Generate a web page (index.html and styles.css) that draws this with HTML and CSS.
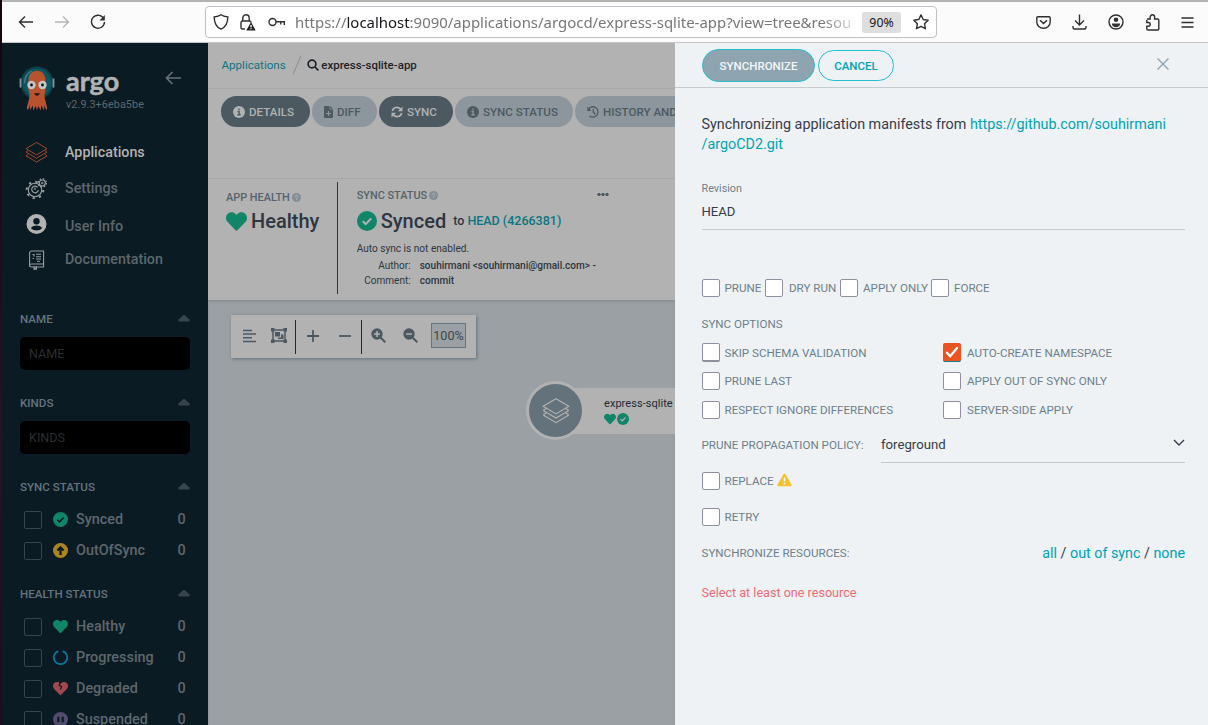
FILE: index.html
```html
<!DOCTYPE html>
<html lang="en">
<head>
<meta charset="utf-8">
<title>express-sqlite-app - Argo CD</title>
<link rel="stylesheet" href="styles.css">
</head>
<body>
<svg class="defs" aria-hidden="true">
  <symbol id="heart" viewBox="0 0 512 512"><path d="M462 62c-55-47-136-38-186 14l-20 20-20-20C186 24 105 15 50 62c-63 54-66 150-10 208l193 200c13 13 33 13 46 0l193-200c56-58 53-154-10-208z"/></symbol>
  <symbol id="check" viewBox="0 0 24 24"><circle cx="12" cy="12" r="12"/><path class="cut" d="M7 12.3l3.4 3.4L17 9" fill="none" stroke-width="2.4"/></symbol>
  <symbol id="info" viewBox="0 0 24 24"><circle cx="12" cy="12" r="12"/><path class="cut" d="M12 5v3.2M9 11h3.3v6M8.7 17.5h6.8" fill="none" stroke-width="2.6"/></symbol>
  <symbol id="help" viewBox="0 0 24 24"><circle cx="12" cy="12" r="12"/><path class="cut" d="M8.5 9.5c0-4.500 7-4.500 7 0 0 2.500-3.500 2.500-3.500 5M12 16.500v2.500" fill="none" stroke-width="2.500"/></symbol>
  <symbol id="layers" viewBox="0 0 24 24"><path d="M12 1.500l11 6.500-11 6.500L1 8zM1 11.500l11 6.500 11-6.500M1 15.500l11 6.500 11-6.500M1 11.500l2.500-1.700M23 11.500l-2.500-1.700M1 15.500l2.500-1.800M23 15.500l-2.500-1.800" fill="none" stroke="currentColor" stroke-width="1"/></symbol>
</svg>
<div class="window">
  <header class="chrome">
    <div class="nav-buttons">
      <svg width="16" height="14" viewBox="0 0 16 14"><path d="M15 7H1.500M7 1.500L1.500 7 7 12.500"/></svg>
      <svg class="dim" width="16" height="14" viewBox="0 0 16 14"><path d="M1 7h13.500M9 1.500L14.500 7 9 12.500"/></svg>
      <svg width="16" height="16" viewBox="0 0 16 16"><path d="M14 5.200A6.500 6.500 0 1 0 14.500 8"/><path d="M14.800 1v5.400H9.400z" fill="#333" stroke="none"/></svg>
    </div>
    <div class="urlbar">
      <svg width="16" height="16" viewBox="0 0 16 16"><path d="M8 .8c2 1.600 4.300 2 6.800 2.200 0 6-1.800 10-6.800 12.200C3 13 1.200 9 1.200 3 3.700 2.800 6 2.400 8 .8z"/></svg>
      <svg class="lock" width="16" height="17" viewBox="0 0 16 17"><path d="M5 15H2.500Q1 15 1 13.500V8.500Q1 7 2.500 7h7Q11 7 11 8.500M2.800 7V4a3.200 3.200 0 0 1 6.400 0v3"/><path d="M11 8l4.700 8.500H6.300z" fill="#222" stroke="none"/><path d="M11 11v2.300M11 14.300v1" stroke="#fff"/></svg>
      <svg class="key" width="17" height="10" viewBox="0 0 17 10"><circle cx="4.500" cy="5" r="3.500"/><path d="M8 4.800h8.300V8M12.800 5v2.500"/></svg>
      <div class="url"><span class="grey">https://</span>localhost<span class="grey">:9090/applications/argocd/express-sqlite-app?view=tree&amp;resou</span></div>
      <span class="zoom">90%</span>
      <svg width="16" height="16" viewBox="0 0 16 16"><path d="M8 .9l2.200 4.600 5 .7-3.700 3.500.9 5L8 12.300l-4.500 2.400.9-5L.8 6.200l5-.7z" stroke-linejoin="round"/></svg>
    </div>
    <div class="chrome-tools">
      <svg width="15" height="13" viewBox="0 0 15 13"><path d="M2 .8h11q1.200 0 1.200 1.200v4a6.700 6.300 0 0 1-13.400 0V2Q.8.800 2 .8zM4 4.200l3.500 3.400L11 4.200"/></svg>
      <svg width="15" height="16" viewBox="0 0 15 16"><path d="M7.500.500v10.300M3 6.500l4.500 4.500L12 6.500M1 12v1.500Q1 15 2.500 15h10q1.500 0 1.500-1.500V12"/></svg>
      <svg width="16" height="16" viewBox="0 0 16 16"><circle cx="8" cy="8" r="7"/><path d="M3.800 9.500h8.400c-.4 5-8 5-8.400 0z" fill="#333" stroke="none"/><circle cx="8" cy="5.800" r="2.300" fill="#333" stroke="none"/></svg>
      <svg width="15" height="17" viewBox="0 0 15 17"><path d="M2 5h3.200V3a2.200 2.200 0 0 1 4.400 0v2h3q1.200 0 1.200 1.200V15q0 1-1 1H3q-1.200 0-1.200-1.200v-2.600h1.500c2.600 0 2.600-3.700 0-3.700H1.800V6"/></svg>
      <svg width="13" height="11" viewBox="0 0 13 11"><path d="M.500 1h12M.500 5.500h12M.500 10h12"/></svg>
    </div>
  </header>

  <div class="app">
    <aside class="sidebar">
      <div class="brand">
        <svg class="mascot" width="36" height="46" viewBox="0 0 36 46">
          <circle cx="18" cy="17" r="16.500" fill="#0d4149"/><circle cx="18" cy="17" r="14.500" fill="#0d5560"/>
          <path d="M5.500 17q0-8 7-12" stroke="#46838a" stroke-width="1.200" fill="none"/>
          <path d="M9.500 14C9.500 1.500 26.500 1.500 26.500 14c.5 3 .8 7 0 10-1 4-1.500 7 0 11 .8 4 2 6.500 1.500 9-1.500-1-2.500-3-3-5l.2 5.500-3-5-.4 5-2.600-4.500-1.200 4.500-1.200-4.500-2.600 4.500-.4-5-3 5 .2-5.500c-.5 2-1.500 4-3 5-.5-2.500.7-5 1.500-9 1.500-4 1-7 0-11-.8-3-.5-7 0-10z" fill="#b8532f"/>
          <circle cx="12.500" cy="19" r="4.200" fill="#c4c4c4"/><circle cx="23.500" cy="19" r="4.200" fill="#c4c4c4"/>
          <circle cx="12.500" cy="19" r="1.400" fill="#111"/><circle cx="23.500" cy="19" r="1.400" fill="#111"/>
          <path d="M15 27.300q3 5 6 0z" fill="#251411"/>
          <path d="M1.500 12.500v9M34.500 12.500v9" stroke="#8295a1" stroke-width="1.800"/>
        </svg>
        <div class="brand-text"><span class="wordmark">argo</span><span class="version">v2.9.3+6eba5be</span></div>
        <svg class="collapse" width="17" height="14" viewBox="0 0 17 14"><path d="M16 7H2M7.500 1L1.500 7l6 6" fill="none" stroke="#66727a" stroke-width="1.700"/></svg>
      </div>
      <nav class="menu">
        <a class="item active"><svg class="orange" width="23" height="23"><use href="#layers"/></svg>Applications</a>
        <a class="item"><svg width="23" height="21" viewBox="0 0 23 21"><g fill="none" stroke="#9a9fa2"><circle cx="10" cy="12" r="6.700" stroke-width="1.100"/><circle cx="10" cy="12" r="8.300" stroke-width="2" stroke-dasharray="2.300 4.220"/><path d="M12.500 9.300a3.300 3.300 0 1 0 .8 2.700M10 12V9.500" stroke-width="1.200"/><circle cx="17.300" cy="5" r="3" fill="#0b1b24" stroke-width="1.100"/><circle cx="17.300" cy="5" r="4.100" stroke-width="1.300" stroke-dasharray="1.600 1.620"/><circle cx="17.300" cy="5" r=".8"/></g></svg>Settings</a>
        <a class="item user"><svg width="23" height="20" viewBox="0 0 23 20"><circle cx="11.500" cy="10" r="10" fill="#b2b2b2"/><circle cx="11.500" cy="7.200" r="3.200" fill="#0b1b24"/><path d="M6 14.300c1-3.800 10-3.800 11 0-3 3-8 3-11 0z" fill="#0b1b24"/></svg>User Info</a>
        <a class="item docs"><svg width="23" height="20" viewBox="0 0 23 20"><g fill="none" stroke="#969ca0" stroke-width="1.100"><path d="M4.600 17V3Q4.600 1 6.600 1h12v16H6.500q-2-.200-2-1.600 0-1.300 2-1.400h12"/><path d="M7.500 4.500h1.500v2M7.500 8.500h1.500M11 4.200h5M11 6.700h5M11 9h5M12 11.300h3M9 16v3.500l1.200-1 1.200 1V16"/></g></svg>Documentation</a>
      </nav>
      <h4 class="filter-title first">NAME<i class="caret"></i></h4>
      <div class="filter-input">NAME</div>
      <h4 class="filter-title">KINDS<i class="caret"></i></h4>
      <div class="filter-input">KINDS</div>
      <h4 class="filter-title tight">SYNC STATUS<i class="caret"></i></h4>
      <div class="filter-row"><i class="box"></i><svg class="green" width="15" height="15"><use href="#check"/></svg><span>Synced</span><b>0</b></div>
      <div class="filter-row"><i class="box"></i><svg width="15" height="15" viewBox="0 0 24 24"><circle cx="12" cy="12" r="12" fill="#ab8520"/><path d="M12 19V7M7 12l5-5 5 5" fill="none" stroke="#0b1b24" stroke-width="3.600"/></svg><span>OutOfSync</span><b>0</b></div>
      <h4 class="filter-title health">HEALTH STATUS<i class="caret"></i></h4>
      <div class="filter-row"><i class="box"></i><svg class="green" width="15" height="15"><use href="#heart"/></svg><span>Healthy</span><b>0</b></div>
      <div class="filter-row"><i class="box"></i><svg width="15" height="15" viewBox="0 0 24 24"><path d="M15.500 1.800a10.700 10.700 0 1 1-7 0" fill="none" stroke="#0b77a0" stroke-width="2.700"/></svg><span>Progressing</span><b>0</b></div>
      <div class="filter-row"><i class="box"></i><svg class="red" width="15" height="15" viewBox="0 0 512 512"><use href="#heart"/><path d="M250 50l-40 95 85 50-45 95" fill="none" stroke="#0b1b24" stroke-width="40"/></svg><span>Degraded</span><b>0</b></div>
      <div class="filter-row"><i class="box"></i><svg width="15" height="15" viewBox="0 0 24 24"><circle cx="12" cy="12" r="12" fill="#534c6c"/><path d="M8.500 7.500v9M15.500 7.500v9" stroke="#0b1b24" stroke-width="3.500"/></svg><span>Suspended</span><b>0</b></div>
    </aside>

    <main class="main">
      <div class="crumbs"><a>Applications</a><svg width="10" height="20" viewBox="0 0 10 20"><path d="M9 .5L1 19.500" stroke="#888f94"/></svg><svg class="search" width="12" height="12" viewBox="0 0 12 12"><circle cx="5" cy="5" r="3.900"/><path d="M8 8l3.400 3.400"/></svg><b>express-sqlite-app</b></div>
      <div class="toolbar">
        <span class="btn dark details"><svg width="12" height="12"><use href="#info"/></svg>DETAILS</span>
        <span class="btn light diff"><svg width="9" height="12" viewBox="0 0 9 12"><path d="M1 0h4.500v3.500H9V11q0 1-1 1H1q-1 0-1-1V1q0-1 1-1zM6.300 0L9 2.700H6.300z"/><path class="cut" d="M4.500 5v5M2 7.500h5" stroke-width="1.200"/></svg>DIFF</span>
        <span class="btn dark sync"><svg width="12" height="12" viewBox="0 0 12 12"><path d="M1.300 5a4.700 4.700 0 0 1 8.500-1.500M10.700 7a4.700 4.700 0 0 1-8.500 1.500" fill="none" stroke="currentColor" stroke-width="1.600"/><path d="M11.500.500v4.700H6.800zM.5 11.500V6.800h4.700z"/></svg>SYNC</span>
        <span class="btn light status-btn"><svg width="12" height="12"><use href="#info"/></svg>SYNC STATUS</span>
        <span class="btn light history"><svg width="12" height="12" viewBox="0 0 12 12"><path d="M1.500 3A5.200 5.200 0 1 1 2.500 10M6.300 3v3.200l2 2" fill="none" stroke="currentColor" stroke-width="1.300"/><path d="M.3.800v4.300h4.300z"/></svg>HISTORY AND</span>
      </div>
      <section class="status">
        <div class="health-col">
          <div class="label">APP HEALTH<svg width="9" height="9"><use href="#help"/></svg></div>
          <div class="big"><svg class="green" width="21" height="21"><use href="#heart"/></svg>Healthy</div>
        </div>
        <div class="sync-col">
          <div class="label">SYNC STATUS<svg width="9" height="9"><use href="#help"/></svg><i class="dots"></i></div>
          <div class="big"><svg class="green" width="20" height="20"><use href="#check"/></svg>Synced<small>to <a>HEAD (4266381)</a></small></div>
          <div class="note">Auto sync is not enabled.</div>
          <div class="meta"><span>Author:</span><b>souhirmani &lt;souhirmani@gmail.com&gt; -</b></div>
          <div class="meta"><span>Comment:</span><b>commit</b></div>
        </div>
      </section>
      <section class="tree">
        <div class="graph-tools">
          <svg class="g-align" width="13" height="14" viewBox="0 0 13 14"><path d="M0 1.500h9M0 5h13M0 8.800h9M0 12.500h13"/></svg>
          <svg class="g-group" width="16" height="15" viewBox="0 0 16 15"><path d="M2 2h12v11H2z" stroke-width="1.500"/><path d="M0 0h3.500v3.500H0zM12.500 0H16v3.500h-3.500zM0 11.500h3.500V15H0zM12.500 11.500H16V15h-3.500zM4 4h5v4.500H4zM10 6.500h2.500V11H7V9.500h3z" fill="#4c5961" stroke="none"/></svg>
          <i class="bar"></i>
          <svg class="g-plus" width="12" height="12" viewBox="0 0 12 12"><path d="M6 0v12M0 6h12"/></svg>
          <svg class="g-minus" width="12" height="12" viewBox="0 0 12 12"><path d="M0 6h12"/></svg>
          <i class="bar"></i>
          <svg class="g-in" width="15" height="15" viewBox="0 0 15 15"><circle cx="6" cy="6" r="5.700" fill="#4c5961" stroke="none"/><path d="M9.500 9.500l4.800 4.800" stroke-width="2"/><path d="M6 3v6M3 6h6" stroke="#b2b2b2" stroke-width="1.500"/></svg>
          <svg class="g-out" width="15" height="15" viewBox="0 0 15 15"><circle cx="6" cy="6" r="5.700" fill="#4c5961" stroke="none"/><path d="M9.500 9.500l4.800 4.800" stroke-width="2"/><path d="M3 6h6" stroke="#b2b2b2" stroke-width="1.500"/></svg>
          <span class="percent">100%</span>
        </div>
        <div class="node">
          <div class="node-icon"><svg width="28" height="28"><use href="#layers"/></svg></div>
          <div class="node-card"><span>express-sqlite</span><div class="node-status"><svg width="12" height="12"><use href="#heart"/></svg><svg width="12" height="12"><use href="#check"/></svg></div></div>
        </div>
      </section>
    </main>

    <section class="panel">
      <div class="panel-head">
        <span class="pill primary">SYNCHRONIZE</span><span class="pill cancel">CANCEL</span>
        <svg class="close" width="12" height="12" viewBox="0 0 12 12"><path d="M.5.500l11 11M11.500.500l-11 11" stroke="#8fa4b1" stroke-width="1.400"/></svg>
      </div>
      <div class="panel-body">
        <p class="intro">Synchronizing application manifests from <a>https://github.com/souhirmani<br>/argoCD2.git</a></p>
        <div class="revision-label">Revision</div>
        <div class="revision">HEAD</div>
        <div class="flags">
          <label class="opt f1"><i class="cb"></i>PRUNE</label><label class="opt f2"><i class="cb"></i>DRY RUN</label><label class="opt f3"><i class="cb"></i>APPLY ONLY</label><label class="opt f4"><i class="cb"></i>FORCE</label>
        </div>
        <div class="caption">SYNC OPTIONS</div>
        <div class="options">
          <label class="opt"><i class="cb edge"></i>SKIP SCHEMA VALIDATION</label>
          <label class="opt right"><i class="cb on"><svg width="18" height="19" viewBox="0 0 18 19"><path d="M4 9.700l3.200 3.500L14 5" fill="none" stroke="#fff" stroke-width="2.300" stroke-linecap="round"/></svg></i>AUTO-CREATE NAMESPACE</label>
          <label class="opt"><i class="cb"></i>PRUNE LAST</label>
          <label class="opt right"><i class="cb"></i>APPLY OUT OF SYNC ONLY</label>
          <label class="opt"><i class="cb"></i>RESPECT IGNORE DIFFERENCES</label>
          <label class="opt right"><i class="cb"></i>SERVER-SIDE APPLY</label>
        </div>
        <div class="policy"><span class="policy-label">PRUNE PROPAGATION POLICY:</span><div class="select">foreground<svg width="12" height="8" viewBox="0 0 12 8"><path d="M1 1l5 5 5-5" fill="none" stroke="#363c4a" stroke-width="1.400"/></svg></div></div>
        <label class="opt single"><i class="cb"></i>REPLACE<svg class="warn" width="15" height="14" viewBox="0 0 15 14"><path d="M7.500.500q.6 0 1 .7l6 10.300q.5 1.700-1 1.700h-12q-1.500 0-1-1.700l6-10.300q.4-.7 1-.7z" fill="#f4c030"/><path d="M7.500 4.500v4M7.500 9.700v1.600" stroke="#fff" stroke-width="1.500"/></svg></label>
        <label class="opt single"><i class="cb"></i>RETRY</label>
        <div class="resources"><span>SYNCHRONIZE RESOURCES:</span><div class="links"><a>all</a> / <a>out of sync</a> / <a>none</a></div></div>
        <div class="error">Select at least one resource</div>
      </div>
    </section>
  </div>
</div>
</body>
</html>
```
FILE: styles.css
```css
* { box-sizing: border-box; }
body { margin: 0; font-family: Roboto, "Liberation Sans", sans-serif; background: #2a0f20; overflow: hidden; }
svg { flex: none; display: block; fill: currentColor; }
.defs { display: none; }
i { font-style: normal; flex: none; }
h4 { margin: 0; }
.window { width: 1208px; height: 725px; padding-left: 2px; display: flex; flex-direction: column; background: linear-gradient(#12060f, #2c1020 60%, #1e0c1c); }

/* Browser chrome */
.chrome { height: 43px; flex: none; display: flex; align-items: center; background: #fbfbfb; border-top: 2px solid #b4b2b0; border-bottom: 1px solid #c5c5c8; }
.chrome svg { fill: none; stroke: #2f2f2f; stroke-width: 1.4; }
.nav-buttons { width: 203px; padding-left: 16px; display: flex; align-items: center; gap: 20px; }
.chrome .dim { stroke: #b5b5b7; }
.urlbar { width: 732px; height: 32px; border: 1px solid #c0c0c4; border-radius: 4px; background: #fff; display: flex; align-items: center; padding: 0 7px; }
.lock { margin-left: 11px; }
.key { margin-left: 12px; }
.url { width: 561px; margin-left: 10px; white-space: nowrap; overflow: hidden; font: 14.95px/22px "Noto Sans", sans-serif; color: #15141a; -webkit-mask-image: linear-gradient(90deg, #000 94%, transparent 101%); mask-image: linear-gradient(90deg, #000 94%, transparent 101%); }
.grey { color: #777; }
.zoom { width: 39px; height: 21px; margin: 0 12px 0 6px; border-radius: 3px; background: #dededf; font: 12.3px/21px "Noto Sans", sans-serif; text-align: center; color: #15141a; }
.chrome-tools { display: flex; align-items: center; margin-left: 99px; gap: 21px; }

.app { flex: 1; min-height: 0; display: flex; }

/* Sidebar */
.sidebar { width: 206px; flex: none; overflow: hidden; background: #0b1b24; color: #5d676d; --cut: #0b1b24; }
.brand { height: 91px; padding: 23px 0 0 17px; display: flex; }
.brand-text { margin-left: 11px; width: 99px; display: flex; flex-direction: column; }
.wordmark { font: 700 27px/30px Lato, sans-serif; color: #b2b2b2; -webkit-text-stroke: .5px #b2b2b2; }
.version { font-size: 10.8px; line-height: 14px; margin-top: 2px; letter-spacing: .08px; white-space: nowrap; }
.collapse { margin-top: 5px; }
.item { display: flex; align-items: center; height: 36px; padding-left: 23px; gap: 17px; font-size: 14.3px; font-weight: 500; }
.item.active { color: #b2b2b2; }
.item.active svg { margin-top: 1px; }
.item.user { height: 40px; }
.item.user svg { margin-top: -5px; }
.item.docs { height: 26px; }
.item.docs svg { margin-top: 2px; }
.orange { color: #a34a2e; }
.filter-title { height: 36px; margin: 15px 18px 0; display: flex; align-items: center; justify-content: space-between; font-size: 11.6px; font-weight: 500; color: #64747d; }
.filter-title.first { margin-top: 29px; }
.filter-title.tight { margin-top: 16px; height: 34px; }
.filter-title.health { margin-top: 11px; height: 34px; }
.caret { width: 12px; height: 7px; margin-top: -2px; background: #37444c; clip-path: polygon(50% 0, 100% 80%, 92% 100%, 8% 100%, 0 80%); }
.filter-input { height: 33px; margin: 0 18px; padding-left: 9px; border-radius: 5px; background: #000; font-size: 12.6px; line-height: 34px; color: #2b2f31; }
.filter-row { height: 31px; display: flex; align-items: center; padding-left: 22px; font-size: 14.4px; font-weight: 500; }
.filter-row svg { margin: 0 8px 0 11px; }
.filter-row span { width: 101.5px; }
.filter-row b { font-weight: 500; }
.box { width: 18px; height: 18px; border: 1px solid #37444c; border-radius: 2px; }
.green { color: #118568; }
.red { color: #a24950; }

/* Main content */
.main { width: 467px; flex: none; overflow: hidden; display: flex; flex-direction: column; background: #b2b2b2; color: #2e3640; }
.crumbs { height: 46px; flex: none; padding: 0 0 2px 13.5px; border-bottom: 1px solid #a6a8a9; display: flex; align-items: center; font-size: 11.6px; }
.main a { color: #0b7581; }
.crumbs svg { margin-left: 6px; }
.crumbs .search { margin-left: 5px; fill: none; stroke: #1d2228; stroke-width: 1.7; }
.crumbs b { margin-left: 2.5px; font-weight: 500; font-size: 11.5px; color: #1d2228; }
.toolbar { height: 90px; flex: none; padding: 7px 0 0 13px; border-bottom: 1px solid #a6a8a9; display: flex; gap: 2px; }
.btn { height: 31px; flex: none; border-radius: 16px; padding-left: 11.5px; display: flex; align-items: center; gap: 4.500px; font-size: 11.6px; font-weight: 500; white-space: nowrap; }
.dark { background: #4c5961; color: #b2b2b2; --cut: #4c5961; }
.light { background: #8d969d; color: #4c5961; --cut: #8d969d; }
.cut { stroke: var(--cut, #b2b2b2); }
.details { width: 89px; }
.diff { width: 65px; }
.sync { width: 74px; }
.status-btn { width: 118px; }
.history { width: 190px; }
.status { height: 121px; flex: none; display: flex; padding: 3px 0 0 18px; }
.health-col { width: 112px; height: 112px; padding-top: 8px; border-right: 1px solid #2e3640; }
.label { display: flex; align-items: center; height: 14px; font-size: 10.9px; font-weight: 500; color: #55626b; }
.label svg { margin-left: 2px; color: #858e95; }
.health-col .big { margin-top: 3px; }
.big { display: flex; align-items: center; height: 28px; font-size: 20px; font-weight: 500; }
.big svg { margin-right: 4px; }
.sync-col { padding: 6px 0 0 18.7px; }
.sync-col .big { margin-top: 5px; }
.big small { font-size: 12.5px; margin: -2px 0 0 7px; }
.dots { width: 12px; height: 3px; margin: -2px 0 0 159px; background: radial-gradient(circle, #4c5961 1.400px, transparent 1.900px) 0 0 / 4px 3px; }
.note { font-size: 10.1px; line-height: 15px; margin-top: 6px; }
.meta { display: flex; height: 15px; font-size: 10.05px; line-height: 15px; }
.note + .meta { margin-top: 2px; }
.meta span { width: 54px; text-align: right; margin-right: 9px; }
.meta b { font-weight: 500; white-space: nowrap; }
.tree { flex: 1; padding: 15px 0 0 23px; background: #9aa0a4; box-shadow: inset 0 2px 2px #8b9195; }
.graph-tools { width: 245px; height: 43px; display: flex; align-items: center; padding-left: 12px; background: #b2b2b2; box-shadow: 1px 1px 3px #62717c; }
.graph-tools svg { fill: none; stroke: #4c5961; stroke-width: 1.500; margin-bottom: 2px; }
.bar { width: 1px; height: 34px; background: #1d2a33; }
.graph-tools .g-group { margin: 0 8px 2px 15px; }
.graph-tools .g-plus { margin-left: 11px; stroke-width: 1.8; }
.graph-tools .g-minus { margin: 0 10px 2px 20px; stroke-width: 1.8; }
.graph-tools .g-in { margin-left: 9px; }
.graph-tools .g-out { margin: 0 13px 2px 17px; }
.percent { width: 35px; height: 25px; margin-bottom: 2px; border: 1px solid #65747e; background: #9aa0a4; font-size: 12.6px; line-height: 24px; text-align: center; color: #3c4850; }
.node { display: flex; align-items: center; margin: 23px 0 0 295px; width: 300px; }
.node-icon { width: 59px; height: 59px; flex: none; border: 3px solid #b2b2b2; border-radius: 50%; background: #64727b; color: #b2b2b2; display: flex; align-items: center; justify-content: center; z-index: 1; }
.node-card { width: 255px; height: 46px; margin-left: -12px; padding: 8px 0 0 31px; background: #b2b2b2; font-size: 11px; line-height: 15px; letter-spacing: .05px; white-space: nowrap; color: #222a33; }
.node-status { display: flex; gap: 1px; margin-top: 2px; color: #118568; }

/* Sliding panel */
.panel { width: 533px; flex: none; background: #eef2f5; color: #363c4a; }
.panel a { color: #00a2b3; }
.panel-head { height: 45px; display: flex; align-items: center; padding-left: 27px; border-bottom: 1px solid #c6cbd0; }
.pill { height: 31px; width: 76px; border: 1px solid #23bfd0; border-radius: 17px; display: flex; align-items: center; justify-content: center; padding-top: 1px; font-size: 11.5px; font-weight: 500; color: #00a2b3; }
.pill.primary { width: 113px; height: 33px; margin-right: 3px; background: #8fa4b1; color: #f4f7f9; }
.close { margin: -2px 0 0 263px; }
.panel-body { padding: 27px 23px 0 26.500px; display: flex; flex-direction: column; }
.intro { margin: 0; font-size: 14.35px; line-height: 20px; white-space: nowrap; }
.revision-label { margin-top: 27px; height: 14px; font-size: 10.8px; line-height: 14px; color: #6d7f8b; }
.revision { height: 34px; padding-top: 6px; border-bottom: 1px solid #c4c9cc; font-size: 13.1px; line-height: 20px; }
.flags { display: flex; margin-top: 49px; height: 18px; }
.f1 { width: 63.500px; }
.f2 { width: 75px; }
.f3 { width: 91px; }
.f2 .cb { margin-right: 6px; }
.opt { display: flex; align-items: center; height: 18px; font-size: 11.6px; color: #6d7f8b; white-space: nowrap; }
.cb { width: 18px; height: 18px; margin-right: 5px; border: 1px solid #8f8f9d; border-radius: 2px; background: #fff; }
.right .cb { margin-right: 6px; }
.edge { height: 19px; border-bottom-width: 2px; }
.cb.on { height: 19px; border: 0; border-bottom: 1px solid #17808a; background: #e95420; }
.caption { font-size: 11.6px; line-height: 16px; margin-top: 19px; color: #6d7f8b; }
.options { display: grid; grid-template-columns: 241.500px 1fr; row-gap: 10.500px; margin-top: 11.6px; }
.policy { display: flex; height: 36px; margin-top: 8px; }
.policy-label { width: 179.5px; font-size: 11.6px; line-height: 36px; color: #6d7f8b; }
.select { flex: 1; height: 36px; border-bottom: 1px solid #c4c9cc; display: flex; justify-content: space-between; font-size: 13.2px; line-height: 35px; }
.select svg { margin-top: 12px; }
.single { margin-top: 9px; }
.single + .single { margin-top: 18px; }
.warn { margin: -2px 0 0 3px; }
.resources { display: flex; justify-content: space-between; align-items: center; margin-top: 17px; height: 20px; font-size: 11.6px; color: #6d7f8b; }
.links { font-size: 14.3px; color: #363c4a; }
.error { margin-top: 21px; font-size: 12.6px; line-height: 18px; color: #e96d76; }
```
